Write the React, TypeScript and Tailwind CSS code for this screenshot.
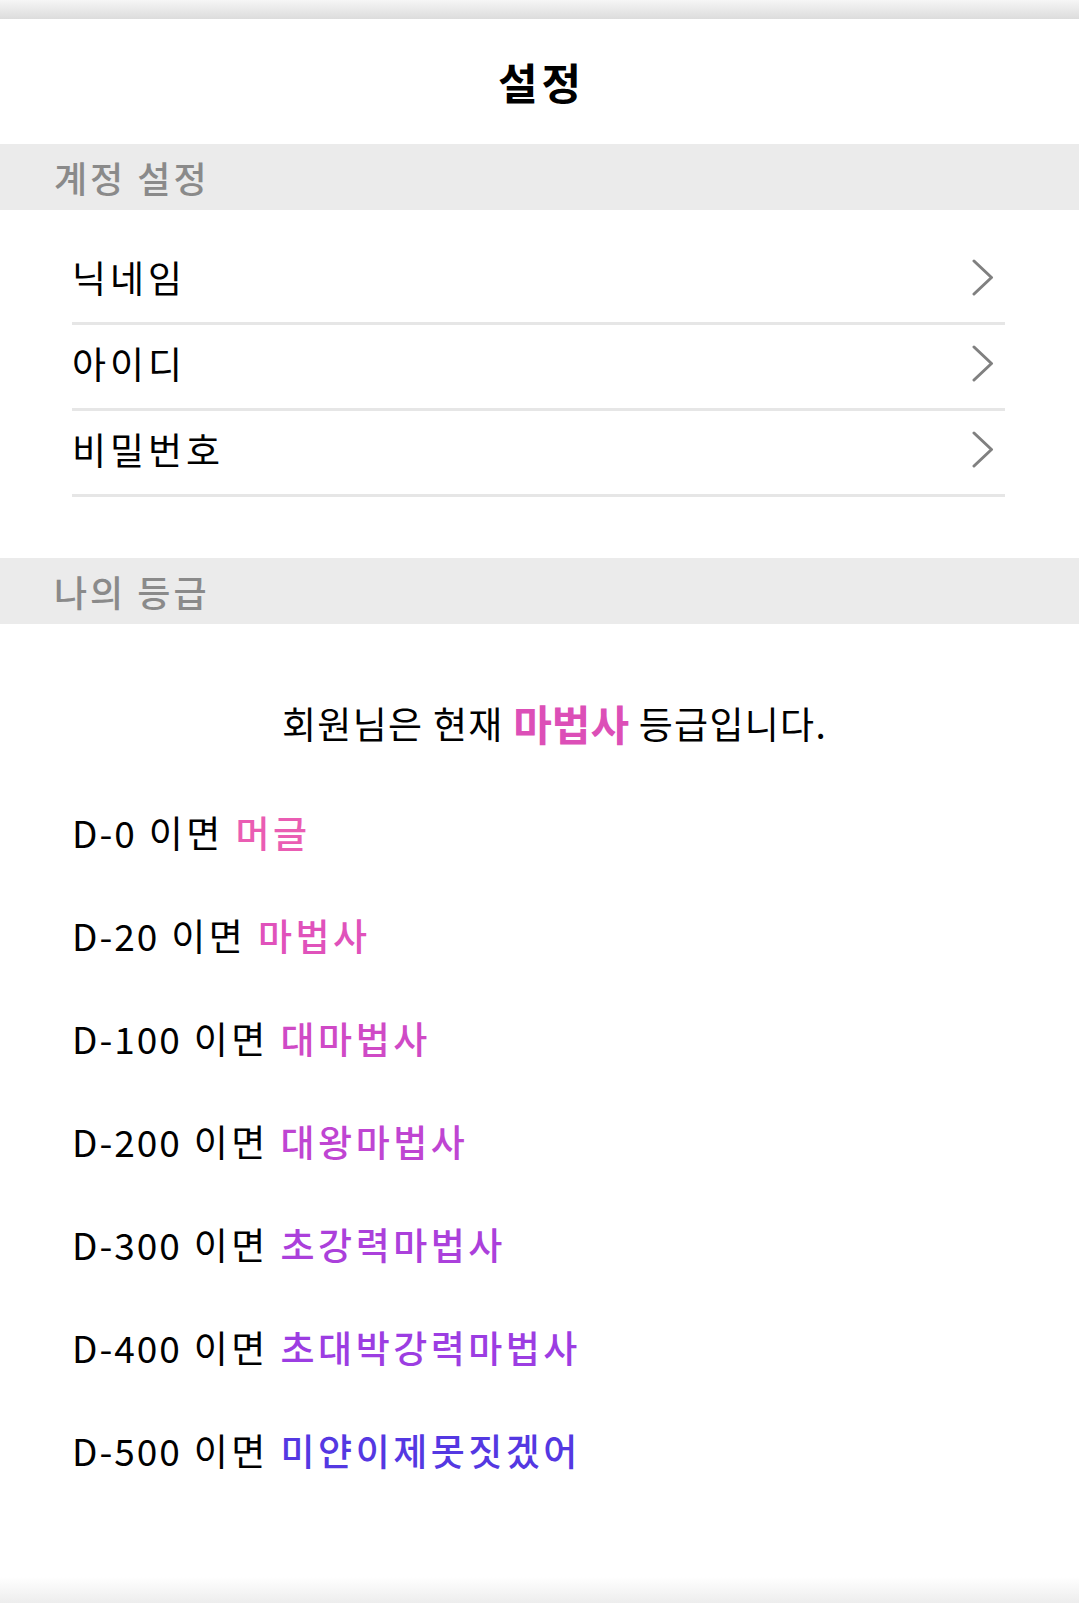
import React from 'react';

const accountRows = ['닉네임', '아이디', '비밀번호'];

// grade thresholds and their label colours
const grades = [
  { day: 'D-0', name: '머글', color: 'text-[#ea5db3]' },
  { day: 'D-20', name: '마법사', color: 'text-[#e052bb]' },
  { day: 'D-100', name: '대마법사', color: 'text-[#cf4ac6]' },
  { day: 'D-200', name: '대왕마법사', color: 'text-[#bf45d2]' },
  { day: 'D-300', name: '초강력마법사', color: 'text-[#ab40db]' },
  { day: 'D-400', name: '초대박강력마법사', color: 'text-[#9c3de2]' },
  { day: 'D-500', name: '미얀이제못짓겠어', color: 'text-[#5438e2]' },
];

function Chevron() {
  return (
    <svg width="22" height="37" viewBox="0 0 22 37" fill="none" className="shrink-0">
      <path d="M2 2 L19.5 18.5 L2 35" stroke="#808080" strokeWidth="3" strokeLinecap="round" strokeLinejoin="round" />
    </svg>
  );
}

function SectionHeader({ title }: { title: string }) {
  return (
    <div className="h-[66px] bg-[#ebebeb] flex items-center pl-[54px]">
      <span className="text-[36px] font-medium tracking-[3px] text-[#8a8a8a] leading-none">{title}</span>
    </div>
  );
}

export default function App() {
  return (
    <div className="w-[1079px] h-[1603px] bg-white flex flex-col font-['Noto_Sans_CJK_KR',sans-serif] text-black overflow-hidden">
      <div className="h-[19px] bg-gradient-to-b from-[#f6f6f6] to-[#dcdcdc]" />

      <div className="h-[125px] flex items-center justify-center">
        <h1 className="text-[43px] font-bold tracking-[4px] leading-none pl-[4px]">설정</h1>
      </div>

      <SectionHeader title="계정 설정" />

      <div className="pt-[29px] ml-[72px] mr-[74px]">
        {accountRows.map((label) => (
          <div key={label} className="h-[86px] pb-[6px] border-b-[3px] border-[#e6e6e6] flex items-center justify-between pr-[11px]">
            <span className="text-[37px] tracking-[4px] leading-none">{label}</span>
            <Chevron />
          </div>
        ))}
      </div>

      <div className="mt-[61px]">
        <SectionHeader title="나의 등급" />
      </div>

      <div className="pt-[76px] h-[124px] flex justify-center pl-[30px]">
        <p className="h-[46px] flex items-center text-[37px] tracking-[1.3px] leading-none">
          회원님은 현재&nbsp;
          <span className="text-[42px] font-bold tracking-normal text-[#dc4fb7]">마법사</span>
          &nbsp;등급입니다.
        </p>
      </div>

      <div className="mt-[33px] pl-[72px]">
        {grades.map((g) => (
          <div key={g.day} className="h-[103px] flex items-center text-[37px] leading-none">
            <span className="tracking-[2px]">{g.day}</span>
            <span className="tracking-[3.5px]">&nbsp;이면&nbsp;</span>
            <span className={`font-medium tracking-[3.5px] ${g.color}`}>{g.name}</span>
          </div>
        ))}
      </div>

      <div className="flex-1" />
      <div className="h-[26px] bg-gradient-to-b from-white to-[#ededed]" />
    </div>
  );
}
